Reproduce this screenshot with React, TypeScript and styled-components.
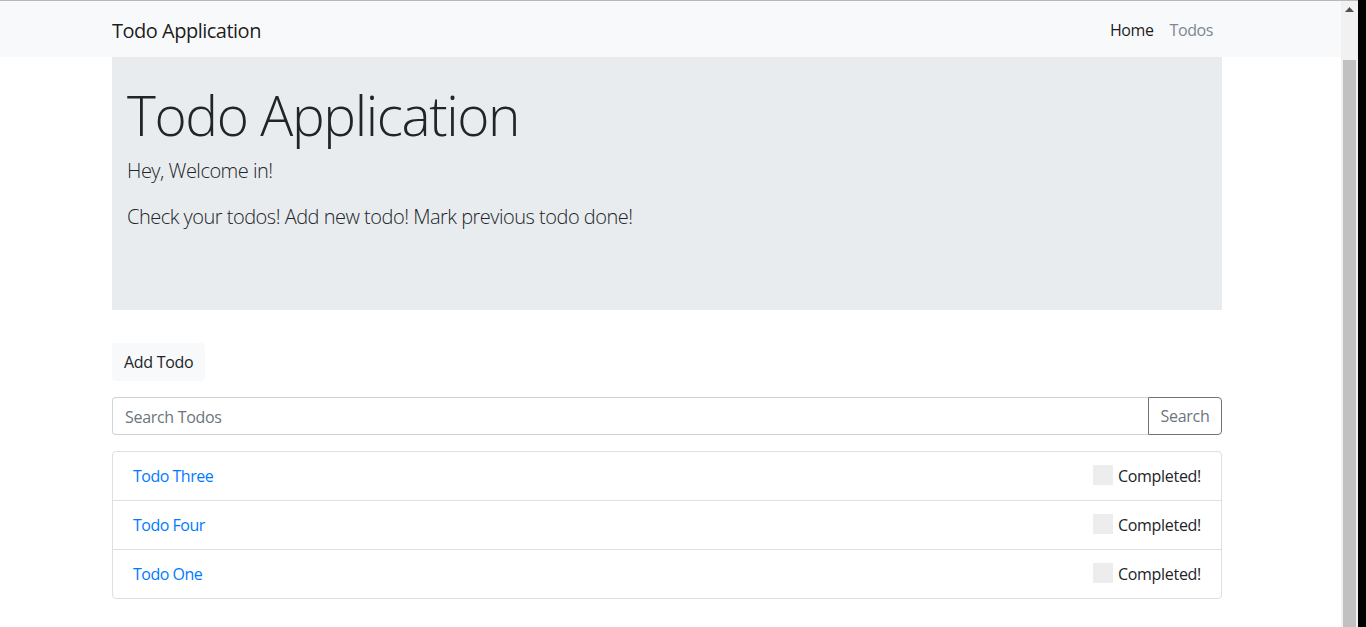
import React from "react";
import styled, { createGlobalStyle } from "styled-components";

const Global = createGlobalStyle`
  html, body { margin: 0; padding: 0; background: #000; }
  body { font-family: "Open Sans", "Noto Sans", sans-serif; color: #212529; }
  * { box-sizing: border-box; }
`;

const Frame = styled.div`
  display: flex;
  width: 1366px;
  height: 627px;
  overflow: hidden;
  background: #000;
`;

const Window = styled.div`
  width: 1358px;
  display: flex;
  flex-direction: column;
  border-top: 1px solid #b9b9b9;
  background: #fff;
`;

const Viewport = styled.div`
  flex: 1;
  display: flex;
  min-height: 0;
`;

const Main = styled.main`
  width: 1341px;
  display: flex;
  flex-direction: column;
`;

const ScrollTrack = styled.div`
  width: 17px;
  background: #f1f1f1;
  display: flex;
  flex-direction: column;
  align-items: center;
`;

const ScrollArrow = styled.div`
  height: 17px;
  width: 17px;
  display: flex;
  align-items: center;
  justify-content: center;
`;

const ScrollThumb = styled.div`
  margin-top: 42px;
  width: 13px;
  flex: 1;
  background: #c1c1c1;
`;

const Navbar = styled.nav`
  height: 56px;
  background: #f8f9fa;
  display: flex;
  align-items: center;
  justify-content: space-between;
  padding: 2px 120px 0 112px;
`;

const Brand = styled.a`
  font-size: 20px;
  color: rgba(0, 0, 0, 0.9);
  text-decoration: none;
  letter-spacing: -0.5px;
  margin-top: 0;
`;

const NavLinks = styled.div`
  display: flex;
`;

const NavLink = styled.a<{ $active?: boolean }>`
  padding: 8px;
  font-size: 16px;
  letter-spacing: -0.4px;
  text-decoration: none;
  color: ${(p) => (p.$active ? "rgba(0,0,0,0.9)" : "#7d8894")};
`;

const Container = styled.div`
  width: 1110px;
  margin-left: 112px;
  display: flex;
  flex-direction: column;
`;

const Jumbotron = styled.section`
  background: #e9ecef;
  height: 253px;
  padding: 25px 15px 0;
  margin-bottom: 33px;
`;

const Title = styled.h1`
  margin: 0 0 8px;
  font-size: 55px;
  font-weight: 300;
  line-height: 66px;
  letter-spacing: -1.4px;
  color: #212529;
`;

const Lead = styled.p`
  margin: 0 0 16px;
  font-size: 20px;
  font-weight: 300;
  line-height: 30px;
  letter-spacing: -0.5px;
  color: #212529;
`;

const LightButton = styled.button`
  align-self: flex-start;
  height: 38px;
  padding: 0 12px;
  border: none;
  border-radius: 4px;
  background: #f8f9fa;
  font-family: inherit;
  font-size: 16px;
  letter-spacing: -0.3px;
  color: #212529;
  margin-bottom: 16px;
`;

const InputGroup = styled.div`
  display: flex;
  height: 38px;
  margin-bottom: 16px;
`;

const SearchInput = styled.input`
  flex: 1;
  height: 38px;
  border: 1px solid #ced4da;
  border-right: none;
  border-radius: 4px 0 0 4px;
  padding: 2px 12px 0;
  font-family: inherit;
  font-size: 16px;
  letter-spacing: -0.3px;
  color: #495057;
  &::placeholder { color: #6c757d; }
`;

const OutlineButton = styled.button`
  width: 74px;
  height: 38px;
  border: 1px solid #6c757d;
  border-radius: 0 4px 4px 0;
  background: #fff;
  font-family: inherit;
  font-size: 16px;
  letter-spacing: -0.3px;
  color: #6c757d;
  padding: 0;
`;

const ListGroup = styled.ul`
  list-style: none;
  margin: 0;
  padding: 0;
  border: 1px solid #dfdfdf;
  border-radius: 4px;
`;

const ListItem = styled.li`
  height: 48px;
  display: flex;
  align-items: center;
  justify-content: space-between;
  padding: 0 20px;
  & + & { border-top: 1px solid #dfdfdf; height: 49px; }
`;

const TodoLink = styled.a`
  color: #007bff;
  text-decoration: none;
  font-size: 16px;
  letter-spacing: -0.5px;
`;

const CheckLabel = styled.label`
  display: flex;
  align-items: center;
  gap: 5px;
  font-size: 16px;
  letter-spacing: -0.3px;
  color: #212529;
`;

const CheckBox = styled.span`
  width: 20px;
  height: 20px;
  background: #ededed;
  margin-top: -3px;
`;

const BlackEdge = styled.div`
  width: 8px;
  background: #000;
`;

const todos = ["Todo Three", "Todo Four", "Todo One"];

export default function App() {
  return (
    <>
      <Global />
      <Frame>
        <Window>
          <Viewport>
            <Main>
              <Navbar>
                <Brand href="#">Todo Application</Brand>
                <NavLinks>
                  <NavLink href="#" $active>Home</NavLink>
                  <NavLink href="#">Todos</NavLink>
                </NavLinks>
              </Navbar>
              <Container>
                <Jumbotron>
                  <Title>Todo Application</Title>
                  <Lead>Hey, Welcome in!</Lead>
                  <Lead>Check your todos! Add new todo! Mark previous todo done!</Lead>
                </Jumbotron>
                <LightButton>Add Todo</LightButton>
                <InputGroup>
                  <SearchInput placeholder="Search Todos" />
                  <OutlineButton>Search</OutlineButton>
                </InputGroup>
                <ListGroup>
                  {todos.map((t) => (
                    <ListItem key={t}>
                      <TodoLink href="#">{t}</TodoLink>
                      <CheckLabel>
                        <CheckBox />
                        Completed!
                      </CheckLabel>
                    </ListItem>
                  ))}
                </ListGroup>
              </Container>
            </Main>
            <ScrollTrack>
              <ScrollArrow>
                <svg width="9" height="5" viewBox="0 0 9 5">
                  <path d="M0 5 L4.5 0 L9 5 Z" fill="#505050" />
                </svg>
              </ScrollArrow>
              <ScrollThumb />
            </ScrollTrack>
          </Viewport>
        </Window>
        <BlackEdge />
      </Frame>
    </>
  );
}
